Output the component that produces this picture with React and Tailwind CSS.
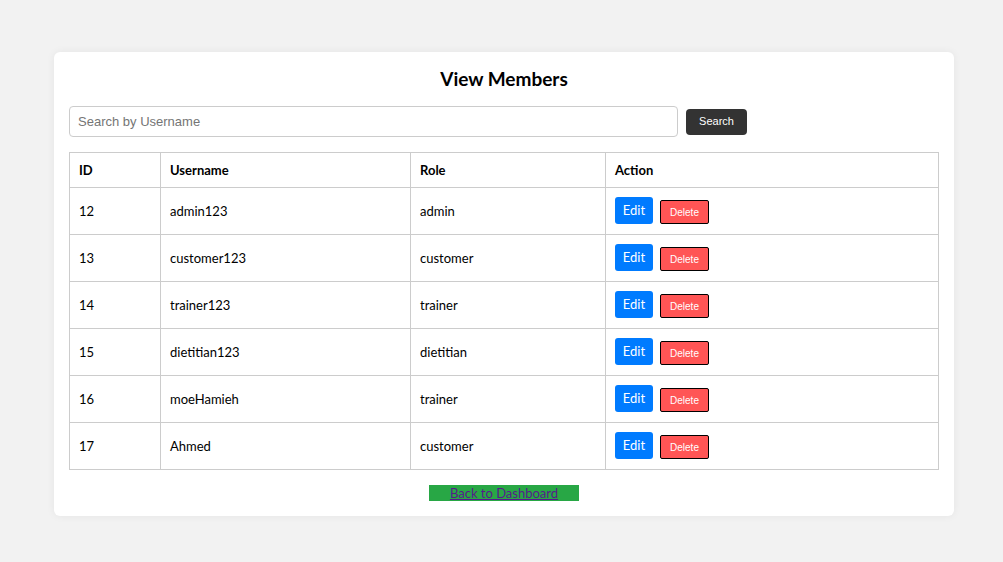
import { useState } from "react";

const members = [
  { id: 12, username: "admin123", role: "admin" },
  { id: 13, username: "customer123", role: "customer" },
  { id: 14, username: "trainer123", role: "trainer" },
  { id: 15, username: "dietitian123", role: "dietitian" },
  { id: 16, username: "moeHamieh", role: "trainer" },
  { id: 17, username: "Ahmed", role: "customer" },
];

export default function App() {
  const [query, setQuery] = useState("");

  return (
    <div className="min-h-screen bg-[#f2f2f2] pt-[52px] font-['Lato',sans-serif] text-black">
      <div className="ml-[54px] w-[900px] rounded-md bg-white p-[15px] shadow-[0_0_8px_rgba(0,0,0,0.06)]">
        <h1 className="text-center text-[19px] font-bold leading-[24px]">View Members</h1>

        <div className="mt-[15px] flex items-center">
          <input
            type="text"
            placeholder="Search by Username"
            value={query}
            onChange={(e) => setQuery(e.target.value)}
            className="h-[31px] w-[609px] rounded border border-[#ccc] px-2 font-['Liberation_Sans',sans-serif] text-[13px] placeholder:text-[#757575] outline-none"
          />
          <button className="ml-2 h-[26px] w-[61px] rounded bg-[#333] font-['Liberation_Sans',sans-serif] text-[11px] text-white">
            Search
          </button>
        </div>

        <table className="mt-[15px] w-[870px] table-fixed border-collapse text-[13px]">
          <colgroup>
            <col className="w-[91px]" />
            <col className="w-[250px]" />
            <col className="w-[195px]" />
            <col />
          </colgroup>
          <thead>
            <tr className="h-[35px]">
              <th className="border border-[#ccc] pl-[9px] pt-[1px] text-left font-bold">ID</th>
              <th className="border border-[#ccc] pl-[9px] pt-[1px] text-left font-bold">Username</th>
              <th className="border border-[#ccc] pl-[9px] pt-[1px] text-left font-bold">Role</th>
              <th className="border border-[#ccc] pl-[9px] pt-[1px] text-left font-bold">Action</th>
            </tr>
          </thead>
          <tbody>
            {members.map((m) => (
              <tr key={m.id} className="h-[47px]">
                <td className="border border-[#ccc] pl-[9px] pt-[2px]">{m.id}</td>
                <td className="border border-[#ccc] pl-[9px] pt-[2px]">{m.username}</td>
                <td className="border border-[#ccc] pl-[9px] pt-[2px]">{m.role}</td>
                <td className="border border-[#ccc] pl-[9px]">
                  <div className="flex items-end pb-[1px]">
                    <button className="h-[27px] w-[38px] rounded-[3px] bg-[#007bff] text-[13px] text-white">
                      Edit
                    </button>
                    <button className="ml-[7px] h-[24px] w-[49px] rounded-[2px] border border-black bg-[#ff5555] font-['Liberation_Sans',sans-serif] text-[10px] text-white">
                      Delete
                    </button>
                  </div>
                </td>
              </tr>
            ))}
          </tbody>
        </table>

        <div className="mt-[15px] flex justify-center">
          <a
            href="#"
            className="block h-[16px] w-[150px] bg-[#28a745] text-center text-[13px] leading-[16px] text-[#551a8b] underline"
          >
            Back to Dashboard
          </a>
        </div>
      </div>
    </div>
  );
}
